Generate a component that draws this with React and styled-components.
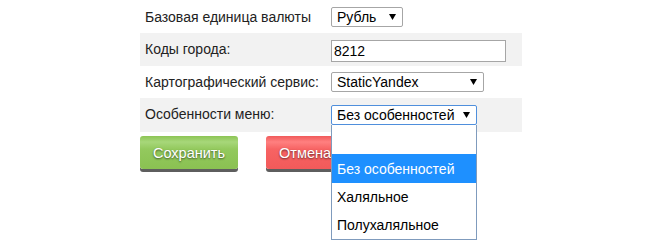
import React from "react";
import styled, { createGlobalStyle } from "styled-components";

const Global = createGlobalStyle`
  html, body { margin: 0; padding: 0; background: #fff; }
  body { font-family: "Liberation Sans", Arial, sans-serif; font-size: 14px; color: #222; }
`;

const Page = styled.div`
  padding-left: 140px;
  width: 382px;
  min-height: 251px;
`;

const Form = styled.div`
  display: flex;
  flex-direction: column;
`;

const Row = styled.div`
  display: grid;
  grid-template-columns: 191px 1fr;
  align-items: center;
  height: ${(p) => p.$h || 33}px;
  background: ${(p) => (p.$shaded ? "#f2f2f2" : "#fff")};
`;

const Label = styled.div`
  padding-left: 5px;
  color: #222;
  font-size: 14px;
  line-height: 16px;
  margin-top: ${(p) => p.$dy || 0}px;
`;

const SelectWrap = styled.div`
  position: relative;
  width: ${(p) => p.$w}px;
`;

const SelectBox = styled.div`
  box-sizing: border-box;
  height: 20px;
  width: 100%;
  display: flex;
  align-items: center;
  justify-content: space-between;
  padding: 0 6px 0 5px;
  border: 1px solid ${(p) => (p.$focus ? "#4f8fdc" : "#a6a6a6")};
  border-radius: 2px;
  background: #fff;
  color: #000;
  font-size: 14px;
  white-space: nowrap;
`;

const Arrow = () => (
  <svg width="7" height="6" viewBox="0 0 7 6">
    <path d="M0 0 H7 L3.5 6 Z" fill="#000" />
  </svg>
);

const TextInput = styled.div`
  box-sizing: border-box;
  width: 175px;
  height: 22px;
  margin-top: 3px;
  border: 1px solid #a6a6a6;
  background: #fff;
  padding-left: 2px;
  display: flex;
  align-items: center;
  color: #000;
  font-size: 14px;
`;

const Dropdown = styled.div`
  position: absolute;
  left: 0;
  top: 100%;
  width: 100%;
  box-sizing: border-box;
  border: 1px solid #7f9bbd;
  border-top: none;
  background: #fff;
  z-index: 5;
`;

const Option = styled.div`
  height: ${(p) => p.$h || 28}px;
  display: flex;
  align-items: center;
  padding-left: 5px;
  font-size: 14px;
  color: ${(p) => (p.$active ? "#fff" : "#000")};
  background: ${(p) => (p.$active ? "#1e90ff" : "#fff")};
`;

const Buttons = styled.div`
  display: flex;
  gap: 28px;
  margin-top: 4px;
`;

const Button = styled.div`
  height: 33px;
  padding: 0 13px;
  border-radius: 3px;
  display: flex;
  align-items: center;
  justify-content: center;
  color: #fff;
  font-size: 14.5px;
  text-shadow: 0 1px 2px rgba(0, 0, 0, 0.6);
  box-shadow: 0 3px 0 #5e5e5e;
  background: ${(p) =>
    p.$kind === "save"
      ? "linear-gradient(to bottom, #8cc454 0%, #a7d77a 18%, #93c95d 40%, #8ac152 100%)"
      : "linear-gradient(to bottom, #f05a5a 0%, #ff8080 18%, #f76363 40%, #f25a5a 100%)"};
`;

export default function App() {
  return (
    <>
      <Global />
      <Page>
        <Form>
          <Row>
            <Label>Базовая единица валюты</Label>
            <SelectWrap $w={72}>
              <SelectBox>
                <span>Рубль</span>
                <Arrow />
              </SelectBox>
            </SelectWrap>
          </Row>
          <Row $shaded>
            <Label $dy={-2}>Коды города:</Label>
            <TextInput>8212</TextInput>
          </Row>
          <Row $h={32}>
            <Label>Картографический сервис:</Label>
            <SelectWrap $w={153}>
              <SelectBox>
                <span>StaticYandex</span>
                <Arrow />
              </SelectBox>
            </SelectWrap>
          </Row>
          <Row $shaded $h={34}>
            <Label $dy={-2}>Особенности меню:</Label>
            <SelectWrap $w={146}>
              <SelectBox $focus>
                <span>Без особенностей</span>
                <Arrow />
              </SelectBox>
              <Dropdown>
                <Option $h={29}></Option>
                <Option $h={29} $active>Без особенностей</Option>
                <Option>Халяльное</Option>
                <Option>Полухаляльное</Option>
              </Dropdown>
            </SelectWrap>
          </Row>
        </Form>
        <Buttons>
          <Button $kind="save">Сохранить</Button>
          <Button $kind="cancel">Отмена</Button>
        </Buttons>
      </Page>
    </>
  );
}
